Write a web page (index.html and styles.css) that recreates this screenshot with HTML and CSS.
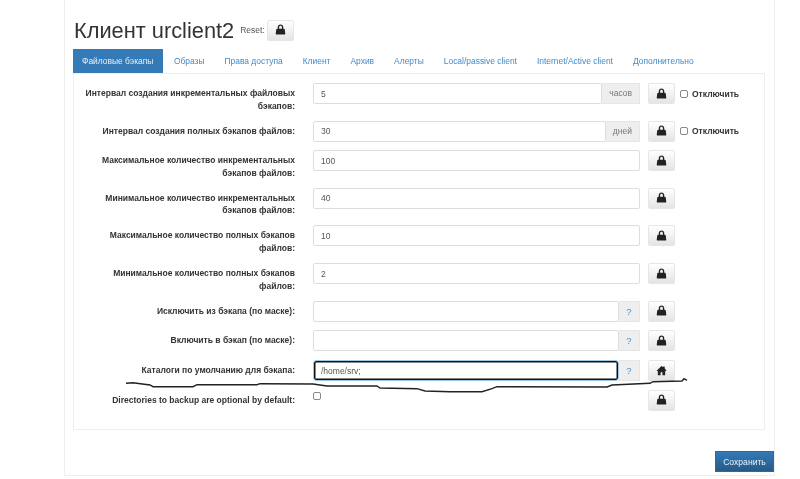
FILE: index.html
```
<!DOCTYPE html>
<html lang="ru">
<head>
<meta charset="utf-8">
<title>Клиент urclient2</title>
<link rel="stylesheet" href="styles.css">
</head>
<body>
<svg width="0" height="0" class="defs">
<symbol id="lock" viewBox="0 0 12 12"><path d="M3 5.200V3.500C3 1.600 4.300.5 6 .5s3 1.100 3 3V5.200h.6c.6 0 1 .4 1.100 1l.5 4.300c0 .6-.4 1-1 1H1.800c-.6 0-1-.4-1-1l.5-4.300c.1-.6.5-1 1.100-1zm1.500 0h3V3.500C7.500 2.600 6.800 2 6 2s-1.500.6-1.500 1.500z" fill="#222"/></symbol>
<symbol id="home" viewBox="0 0 12 12"><path d="M6 1 .6 6.200l.7.7L2 6.300v4.900h3V8h2v3.200h3V6.300l.7.6.7-.7L9.500 3.500V1.500H8v.6L6 1z" fill="#222"/></symbol>
</svg>
<main class="page">
  <header class="head">
    <h1 class="title">Клиент urclient2</h1>
    <span class="reset-label">Reset:</span>
    <button class="btn" type="button"><svg class="ico"><use href="#lock"/></svg></button>
  </header>
  <nav class="tabs">
    <a class="tab active">Файловые бэкапы</a>
    <a class="tab">Образы</a>
    <a class="tab">Права доступа</a>
    <a class="tab">Клиент</a>
    <a class="tab">Архив</a>
    <a class="tab">Алерты</a>
    <a class="tab">Local/passive client</a>
    <a class="tab">Internet/Active client</a>
    <a class="tab">Дополнительно</a>
  </nav>
  <section class="box">
    <div class="row tall">
      <label class="lbl">Интервал создания инкрементальных файловых бэкапов:</label>
      <div class="group"><input class="field" value="5"><span class="addon">часов</span></div>
      <button class="btn" type="button"><svg class="ico"><use href="#lock"/></svg></button>
      <label class="off"><input type="checkbox" class="chk">Отключить</label>
    </div>
    <div class="row short">
      <label class="lbl">Интервал создания полных бэкапов файлов:</label>
      <div class="group"><input class="field" value="30"><span class="addon">дней</span></div>
      <button class="btn" type="button"><svg class="ico"><use href="#lock"/></svg></button>
      <label class="off"><input type="checkbox" class="chk">Отключить</label>
    </div>
    <div class="row tall">
      <label class="lbl">Максимальное количество инкрементальных бэкапов файлов:</label>
      <div class="group"><input class="field" value="100"></div>
      <button class="btn" type="button"><svg class="ico"><use href="#lock"/></svg></button>
    </div>
    <div class="row tall">
      <label class="lbl">Минимальное количество инкрементальных бэкапов файлов:</label>
      <div class="group"><input class="field" value="40"></div>
      <button class="btn" type="button"><svg class="ico"><use href="#lock"/></svg></button>
    </div>
    <div class="row tall">
      <label class="lbl">Максимальное количество полных бэкапов файлов:</label>
      <div class="group"><input class="field" value="10"></div>
      <button class="btn" type="button"><svg class="ico"><use href="#lock"/></svg></button>
    </div>
    <div class="row tall">
      <label class="lbl">Минимальное количество полных бэкапов файлов:</label>
      <div class="group"><input class="field" value="2"></div>
      <button class="btn" type="button"><svg class="ico"><use href="#lock"/></svg></button>
    </div>
    <div class="row mid">
      <label class="lbl">Исключить из бэкапа (по маске):</label>
      <div class="group"><input class="field" value=""><span class="addon help">?</span></div>
      <button class="btn" type="button"><svg class="ico"><use href="#lock"/></svg></button>
    </div>
    <div class="row mid">
      <label class="lbl">Включить в бэкап (по маске):</label>
      <div class="group"><input class="field" value=""><span class="addon help">?</span></div>
      <button class="btn" type="button"><svg class="ico"><use href="#lock"/></svg></button>
    </div>
    <div class="row mid">
      <label class="lbl">Каталоги по умолчанию для бэкапа:</label>
      <div class="group"><input class="field focus" value="/home/srv;"><span class="addon help">?</span></div>
      <button class="btn" type="button"><svg class="ico"><use href="#home"/></svg></button>
    </div>
    <div class="row last">
      <label class="lbl">Directories to backup are optional by default:</label>
      <div class="group"><input type="checkbox" class="chk solo"></div>
      <button class="btn" type="button"><svg class="ico"><use href="#lock"/></svg></button>
    </div>
  </section>
  <footer class="foot"><button class="save" type="button">Сохранить</button></footer>
</main>
<svg class="scribble" width="800" height="479" viewBox="0 0 800 479"><path d="M126 383.300 133 382.700 150 385 153 386.700H193L197 384.700H257L260 383.700 313 384 327 386H377L380 388 417 388.700 425 391 450 391.700H482L492 388.700 497 386.700 607 387 612 385 650 383.300 653 381.700 682 381 684 378.700 687 380.300" fill="none" stroke="#222" stroke-width="1.400"/></svg>
</body>
</html>
```
FILE: styles.css
```
* { box-sizing: border-box; }
html, body { margin: 0; padding: 0; background: #fff; }
body { width: 800px; height: 479px; overflow: hidden; font-family: "Liberation Sans", Arial, sans-serif; font-size: 8.500px; color: #333; position: relative; filter: blur(.3px); }
.defs { position: absolute; }
.page { margin-left: 64px; width: 711px; height: 476px; border: 1px solid #eee; border-top: 0; padding: 13px 9px 0 8px; }
.head { display: flex; align-items: center; height: 36px; padding-left: 1px; }
.head .btn { margin-top: -2px; }
.title { margin: 0 6px 0 0; font-size: 21.800px; font-weight: 400; line-height: 28px; }
.reset-label { font-size: 8.500px; margin-right: 2px; color: #555; margin-top: -3px; }
.btn { width: 27px; height: 21px; padding: 0; display: inline-flex; align-items: center; justify-content: center; flex: none; border: 1px solid #e6e6e6; border-radius: 2px; background: linear-gradient(#fff, #e4e4e4); }
.ico { width: 11px; height: 11px; display: block; margin-top: -1px; }
.tabs { display: flex; height: 24px; }
.tab { padding: 0 9px; margin-right: 2px; line-height: 24px; color: #428bca; font-size: 8.450px; white-space: nowrap; }
.tab.active { background: #337ab7; color: #e8f0f7; padding-right: 10px; margin-right: 1.500px; }
.box { border: 1px solid #eee; width: 692px; height: 357px; padding-top: 9px; }
.row { display: flex; align-items: flex-start; }
.row.tall { height: 37.600px; }
.row.short { height: 29.700px; }
.row.mid { height: 29.700px; }
.lbl { width: 221px; flex: none; text-align: right; font-weight: 700; line-height: 12.500px; padding: 4px 0 0 6px; color: #333; }
.group { width: 327px; margin-left: 18px; margin-right: 8px; display: flex; height: 21px; flex: none; }
.field { flex: 1; min-width: 0; height: 21px; border: 1px solid #ddd; padding: 0 7px; font: 8.500px "Liberation Sans", Arial, sans-serif; color: #555; border-radius: 2px; }
.field.focus { border-color: #9cc8ea; border-radius: 3px; box-shadow: inset 0 0 0 1.500px #111; outline: 0; }
.addon { flex: none; height: 21px; padding: 0 7px; line-height: 19px; background: #eee; border: 1px solid #e6e6e6; border-left: 0; color: #777; font-size: 8.500px; }
.help { width: 21px; padding: 0; text-align: center; color: #4a90c8; font-size: 9.500px; }
.off { display: flex; align-items: center; margin-left: 5px; font-weight: 700; height: 21px; white-space: nowrap; color: #333; }
.chk { appearance: none; margin: 0 4px 0 0; width: 8px; height: 8px; background: #fff; border: 1px solid #888; border-radius: 2px; flex: none; }
.chk.solo { margin: 2px 0 0 0; }
.foot { display: flex; justify-content: flex-end; margin: 21px -9px 0 0; }
.save { width: 59px; height: 21px; border: 1px solid #2b6a9e; background: linear-gradient(#337ab7, #265a88); color: #e8f0f7; font: 8.600px "Liberation Sans", Arial, sans-serif; padding: 0; }
.scribble { position: absolute; left: 0; top: 0; pointer-events: none; }
```
